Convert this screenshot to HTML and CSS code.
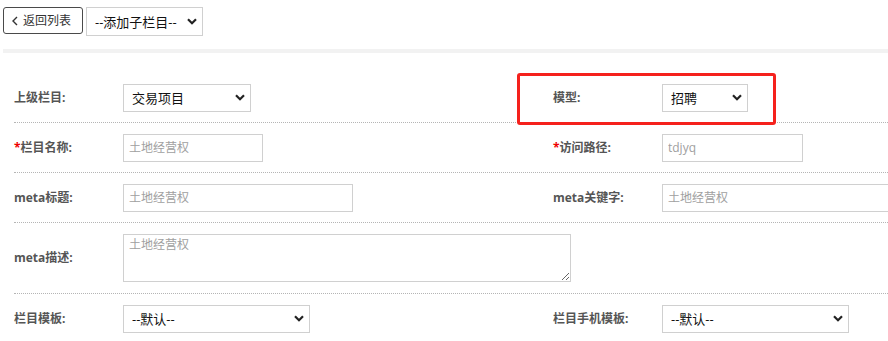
FILE: index.html
```html
<!DOCTYPE html>
<html lang="zh-CN">
<head>
  <meta charset="UTF-8" />
  <title>栏目编辑</title>
  <link rel="stylesheet" href="styles.css">
</head>
<body>
  <div class="toolbar">
    <button class="back-btn">
      <svg width="6" height="10" viewBox="0 0 6 10"><path d="M5 1 L1 5 L5 9" fill="none" stroke="#333" stroke-width="1.4"/></svg>
      返回列表
    </button>
    <select class="sel sel-top">
      <option>--添加子栏目--</option>
    </select>
  </div>
  <div class="band"></div>

  <div class="form-wrap">
    <div class="form">
      <div class="row">
        <div class="cell">
          <label class="lbl">上级栏目:</label>
          <select class="sel" style="width: 128px;"><option>交易项目</option></select>
        </div>
        <div class="cell">
          <label class="lbl">模型:</label>
          <select class="sel" style="width: 86px;"><option>招聘</option></select>
        </div>
      </div>
      <div class="row">
        <div class="cell">
          <label class="lbl"><span class="req">*</span>栏目名称:</label>
          <input class="txt" style="width: 140px;" placeholder="土地经营权">
        </div>
        <div class="cell">
          <label class="lbl"><span class="req">*</span>访问路径:</label>
          <input class="txt" style="width: 141px;" placeholder="tdjyq">
        </div>
      </div>
      <div class="row">
        <div class="cell">
          <label class="lbl">meta标题:</label>
          <input class="txt" style="width: 230px;" placeholder="土地经营权">
        </div>
        <div class="cell">
          <label class="lbl">meta关键字:</label>
          <input class="txt" style="width: 280px;" placeholder="土地经营权">
        </div>
      </div>
      <div class="row row-tall">
        <div class="cell cell-wide">
          <label class="lbl">meta描述:</label>
          <textarea class="area" placeholder="土地经营权"></textarea>
        </div>
      </div>
      <div class="row">
        <div class="cell">
          <label class="lbl">栏目模板:</label>
          <select class="sel" style="width: 187px;"><option>--默认--</option></select>
        </div>
        <div class="cell">
          <label class="lbl">栏目手机模板:</label>
          <select class="sel" style="width: 187px;"><option>--默认--</option></select>
        </div>
      </div>
    </div>
    <div class="mark"></div>
  </div>
</body>
</html>
```

FILE: styles.css
```css
body {
  margin: 0;
  font-family: "Open Sans", "Noto Sans CJK SC", sans-serif;
  font-size: 12px;
  color: #333;
  background: #fff;
  overflow: hidden;
}

.toolbar {
  display: flex;
  align-items: flex-start;
  gap: 3px;
  padding: 7px 3px 0;
  height: 49px;
  box-sizing: border-box;
}

.back-btn {
  display: flex;
  align-items: center;
  gap: 5px;
  width: 80px;
  height: 27px;
  padding: 0 0 0 8px;
  border: 1px solid #4a4a4a;
  border-radius: 3px;
  background: #fff;
  font-family: inherit;
  font-size: 12px;
  color: #333;
  line-height: 1;
}

.band {
  height: 4px;
  margin: 0 0 0 3px;
  background: #f2f2f2;
}

.form-wrap {
  position: relative;
  padding-top: 20px;
  overflow: hidden;
}

.form {
  width: 1078px;
  margin-left: 14px;
}

.row {
  display: flex;
  height: 49px;
  border-bottom: 1px dotted #b5b5b5;
}

.row-tall {
  height: 70px;
}

.cell {
  display: flex;
  align-items: center;
  width: 539px;
}

.cell-wide {
  width: 1078px;
}

.lbl {
  width: 109px;
  flex-shrink: 0;
  font-weight: bold;
  color: #555;
  line-height: 16px;
}

.req {
  color: #e00;
}

.sel {
  -webkit-appearance: none;
  appearance: none;
  height: 28px;
  padding: 0 20px 0 8px;
  border: 1px solid #d0d0d0;
  border-radius: 0;
  background: #fff url("data:image/svg+xml,%3Csvg xmlns='http://www.w3.org/2000/svg' width='10' height='7' viewBox='0 0 10 7'%3E%3Cpath d='M1 1.2 L5 5.2 L9 1.2' fill='none' stroke='%23222' stroke-width='2.2'/%3E%3C/svg%3E") no-repeat right 5px center;
  font-family: inherit;
  font-size: 13px;
  color: #111;
}

.sel-top {
  width: 117px;
  height: 29px;
}

.txt {
  height: 28px;
  box-sizing: border-box;
  padding: 0 5px;
  border: 1px solid #d0d0d0;
  font-family: inherit;
  font-size: 12px;
  color: #999;
  outline: none;
}

.txt::placeholder,
.area::placeholder {
  color: #a0a0a0;
}

.area {
  width: 448px;
  height: 48px;
  box-sizing: border-box;
  padding: 2px 5px;
  border: 1px solid #d0d0d0;
  font-family: inherit;
  font-size: 12px;
  line-height: 16px;
  outline: none;
}

.mark {
  position: absolute;
  left: 517px;
  top: 20px;
  width: 259px;
  height: 52px;
  box-sizing: border-box;
  border: 3px solid #f5211d;
  border-radius: 3px;
}
```
